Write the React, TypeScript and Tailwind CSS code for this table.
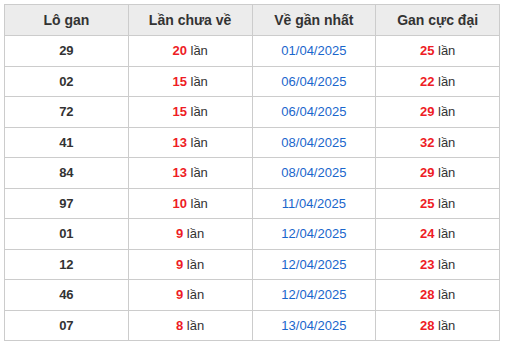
const rows = [
  { lo: '29', chua: 20, date: '01/04/2025', max: 25 },
  { lo: '02', chua: 15, date: '06/04/2025', max: 22 },
  { lo: '72', chua: 15, date: '06/04/2025', max: 29 },
  { lo: '41', chua: 13, date: '08/04/2025', max: 32 },
  { lo: '84', chua: 13, date: '08/04/2025', max: 29 },
  { lo: '97', chua: 10, date: '11/04/2025', max: 25 },
  { lo: '01', chua: 9, date: '12/04/2025', max: 24 },
  { lo: '12', chua: 9, date: '12/04/2025', max: 23 },
  { lo: '46', chua: 9, date: '12/04/2025', max: 28 },
  { lo: '07', chua: 8, date: '13/04/2025', max: 28 },
];

export default function App() {
  return (
    <div className="bg-white w-[506px] h-[345px] pl-[4px] pt-[4px] font-['Liberation_Sans',Arial,sans-serif] text-[13px] text-[#333]">
      <table className="w-[496px] border-collapse table-fixed">
        <thead>
          <tr className="h-[31px] bg-[#ececec]">
            {['Lô gan', 'Lần chưa về', 'Về gần nhất', 'Gan cực đại'].map((h) => (
              <th key={h} className="border border-[#cccccc] font-bold text-center p-0 text-[14px]">
                {h}
              </th>
            ))}
          </tr>
        </thead>
        <tbody>
          {rows.map((r, i) => (
            <tr key={i} className="h-[30.5px]">
              <td className="border border-[#cccccc] text-center font-bold p-0">{r.lo}</td>
              <td className="border border-[#cccccc] text-center p-0">
                <span className="font-bold text-[#ee1c25]">{r.chua}</span> lần
              </td>
              <td className="border border-[#cccccc] text-center p-0 text-[#1a66cc]">{r.date}</td>
              <td className="border border-[#cccccc] text-center p-0">
                <span className="font-bold text-[#ee1c25]">{r.max}</span> lần
              </td>
            </tr>
          ))}
        </tbody>
      </table>
    </div>
  );
}
